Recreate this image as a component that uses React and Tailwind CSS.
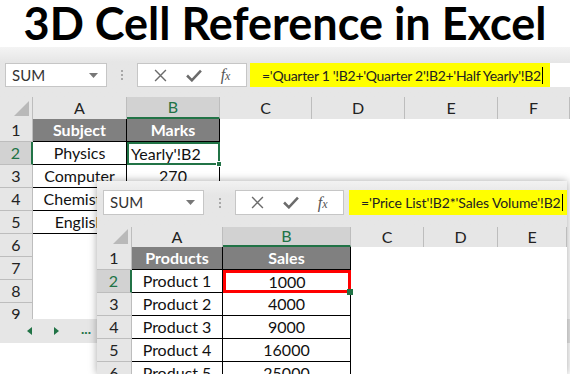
import React from "react";

const win1Cols = [
  { key: "A", w: "w-[94px]" },
  { key: "B", w: "w-[93px]", sel: true },
  { key: "C", w: "w-[92px]" },
  { key: "D", w: "w-[93px]" },
  { key: "E", w: "w-[93px]" },
  { key: "F", w: "flex-1" },
];

const win2Cols = [
  { key: "A", w: "w-[91px]" },
  { key: "B", w: "w-[128px]", sel: true },
  { key: "C", w: "w-[73px]" },
  { key: "D", w: "w-[74px]" },
  { key: "E", w: "flex-1" },
];

const subjects = ["Physics", "Computer", "Chemistry", "English"];
const products = [
  ["Product 1", "1000"],
  ["Product 2", "4000"],
  ["Product 3", "9000"],
  ["Product 4", "16000"],
  ["Product 5", "25000"],
];

function NameBox({ className }) {
  return (
    <div className={`shrink-0 flex items-center justify-between bg-white border border-[#c6c6c6] pl-[6px] pr-[8px] text-[15px] text-[#333] ${className}`}>
      <span>SUM</span>
      <svg width="9" height="5" viewBox="0 0 9 5">
        <path d="M0 0h9L4.5 5z" fill="#777" />
      </svg>
    </div>
  );
}

function Dots({ className }) {
  return (
    <div className={`shrink-0 flex flex-col items-center justify-center gap-[2px] ${className}`}>
      <span className="w-[2px] h-[2px] bg-[#a8a8a8]" />
      <span className="w-[2px] h-[2px] bg-[#a8a8a8]" />
      <span className="w-[2px] h-[2px] bg-[#a8a8a8]" />
    </div>
  );
}

function FxBox({ className }) {
  return (
    <div className={`shrink-0 flex items-center justify-around bg-white border border-[#c6c6c6] px-[6px] ${className}`}>
      <svg width="13" height="13" viewBox="0 0 12 12">
        <path d="M1 1l10 10M11 1L1 11" stroke="#6b6b6b" strokeWidth="1.3" />
      </svg>
      <svg width="16" height="13" viewBox="0 0 15 12">
        <path d="M1 6l4.5 4.5L14 1.5" stroke="#6b6b6b" strokeWidth="2.4" fill="none" />
      </svg>
      <span className="font-['Liberation_Serif',serif] italic text-[16px] text-[#555] leading-none">
        f<span className="text-[12px]">x</span>
      </span>
    </div>
  );
}

function ColHeader({ cols, cornerW, h }) {
  return (
    <div className={`flex ${h} bg-[#e6e6e6] text-[16px] text-[#222]`}>
      <div className={`relative ${cornerW} border-r border-[#bdbdbd]`}>
        <svg className="absolute right-[3px] bottom-[3px]" width="15" height="15" viewBox="0 0 15 15">
          <path d="M15 0v15H0z" fill="#b9b9b9" />
        </svg>
      </div>
      {cols.map((c) => (
        <div
          key={c.key}
          className={`${c.w} flex items-center justify-center border-r border-[#bdbdbd] ${
            c.sel ? "bg-[#d2d2d2] text-[#217346] border-b-2 border-b-[#217346]" : ""
          }`}
        >
          {c.key}
        </div>
      ))}
    </div>
  );
}

function RowNum({ n, w, sel }) {
  return (
    <div
      className={`${w} h-[23px] shrink-0 flex items-center justify-center border-b border-[#bdbdbd] text-[16px] ${
        sel ? "bg-[#d2d2d2] text-[#217346] border-r-2 border-r-[#217346]" : "bg-[#e6e6e6] text-[#222] border-r border-r-[#bdbdbd]"
      }`}
    >
      {n}
    </div>
  );
}

function FirstWindow() {
  return (
    <div className="bg-[#e6e6e6]">
      <div className="h-[50px] flex items-start pt-[16px] pl-[5px] bg-linear-to-b from-[#f4f4f4] to-[#e6e6e6] to-30%">
        <NameBox className="w-[102px] h-[24px]" />
        <Dots className="w-[30px] h-[24px]" />
        <FxBox className="w-[110px] h-[24px]" />
        <div className="ml-[3px] flex-1 min-w-0 h-[24px] bg-white flex">
          <div className="w-[300px] shrink-0 h-full bg-[#ffff00] flex items-center pl-[12px] text-[14px] tracking-[-0.3px] text-[#222] whitespace-nowrap overflow-hidden">
            ='Quarter 1 '!B2+'Quarter 2'!B2+'Half Yearly'!B2
            <span className="ml-[1px] w-px h-[17px] bg-black shrink-0" />
          </div>
        </div>
      </div>
      <ColHeader cols={win1Cols} cornerW="w-[33px]" h="h-[22px]" />
      <div className="h-[200px] overflow-hidden bg-white">
        {[1, 2, 3, 4, 5, 6, 7, 8, 9].map((n) => (
          <div key={n} className="flex h-[23px] text-[16px] text-[#111]">
            <RowNum n={n} w="w-[33px]" sel={n === 2} />
            {n === 1 && (
              <>
                <div className="w-[94px] bg-[#808080] text-white font-bold flex items-center justify-center border-r border-b border-black">Subject</div>
                <div className="w-[93px] bg-[#808080] text-white font-bold flex items-center justify-center border-r border-b border-black">Marks</div>
              </>
            )}
            {n >= 2 && n <= 5 && (
              <>
                <div className="w-[94px] flex items-center justify-center border-r border-b border-black whitespace-nowrap overflow-hidden">
                  {subjects[n - 2]}
                </div>
                {n === 2 ? (
                  <div className="relative w-[93px] flex items-center pl-[2px] border-2 border-[#217346]">
                    Yearly'!B2
                    <span className="absolute -right-[4px] -bottom-[4px] w-[6px] h-[6px] bg-[#217346] border border-white" />
                  </div>
                ) : (
                  <div className="w-[93px] flex items-center justify-center border-r border-b border-black">{n === 3 ? "270" : ""}</div>
                )}
              </>
            )}
          </div>
        ))}
      </div>
      <div className="h-[24px] flex items-center gap-[22px] pl-[27px] bg-[#e6e6e6]">
        <svg width="5" height="8" viewBox="0 0 5 8"><path d="M5 0v8L0 4z" fill="#217346" /></svg>
        <svg width="5" height="8" viewBox="0 0 5 8"><path d="M0 0v8l5-4z" fill="#217346" /></svg>
        <span className="text-[#217346] font-bold text-[14px] leading-none -mt-[4px]">...</span>
      </div>
    </div>
  );
}

function SecondWindow() {
  return (
    <div className="absolute left-[97px] top-[181px] w-[470px] h-[193px] bg-white shadow-[0_0_8px_rgba(0,0,0,0.35)] overflow-hidden">
      <div className="h-[46px] flex items-start pt-[9px] pl-[6px] bg-linear-to-b from-[#f2f2f2] to-[#e6e6e6] to-30%">
        <NameBox className="w-[101px] h-[25px]" />
        <Dots className="w-[31px] h-[25px]" />
        <FxBox className="w-[109px] h-[25px]" />
        <div className="ml-[5px] flex-1 min-w-0 h-[25px] bg-[#ffff00] flex items-center pl-[12px] text-[14px] tracking-[-0.12px] text-[#222] whitespace-nowrap overflow-hidden">
          ='Price List'!B2*'Sales Volume'!B2
          <span className="ml-[1px] w-px h-[17px] bg-black shrink-0" />
        </div>
      </div>
      <ColHeader cols={win2Cols} cornerW="w-[35px]" h="h-[20px]" />
      <div className="bg-white">
        {[1, 2, 3, 4, 5, 6].map((n) => (
          <div key={n} className="flex h-[23px] text-[16px] text-[#111]">
            <RowNum n={n} w="w-[35px]" sel={n === 2} />
            {n === 1 ? (
              <>
                <div className="w-[91px] bg-[#808080] text-white font-bold flex items-center justify-center border-r border-b border-black">Products</div>
                <div className="w-[128px] bg-[#808080] text-white font-bold flex items-center justify-center border-r border-b border-black">Sales</div>
              </>
            ) : (
              <>
                <div className="w-[91px] flex items-center justify-center border-r border-b border-black">{products[n - 2][0]}</div>
                {n === 2 ? (
                  <div className="relative w-[128px] flex items-center justify-center border-[3px] border-[#ff0000]">
                    {products[0][1]}
                    <span className="absolute -right-[5px] -bottom-[5px] w-[6px] h-[6px] bg-[#217346]" />
                  </div>
                ) : (
                  <div className="w-[128px] flex items-center justify-center border-r border-b border-black">{products[n - 2][1]}</div>
                )}
              </>
            )}
          </div>
        ))}
      </div>
    </div>
  );
}

export default function App() {
  return (
    <div className="relative w-[570px] h-[374px] overflow-hidden bg-white font-['Lato','Noto_Sans',sans-serif]">
      <div className="h-[47px] flex items-center justify-center text-[45px] font-bold text-black leading-none">
        3D Cell Reference in Excel
      </div>
      <FirstWindow />
      <SecondWindow />
    </div>
  );
}
